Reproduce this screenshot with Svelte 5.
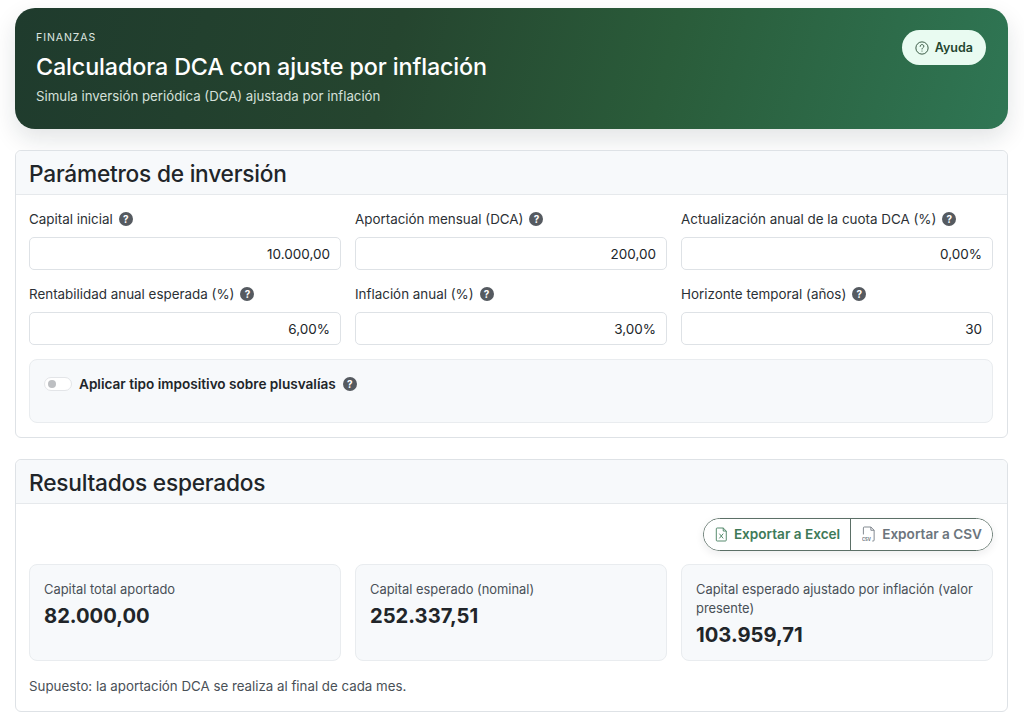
<script lang="ts">
  const fields = [
    { label: 'Capital inicial', value: '10.000,00' },
    { label: 'Aportación mensual (DCA)', value: '200,00' },
    { label: 'Actualización anual de la cuota DCA (%)', value: '0,00%' },
    { label: 'Rentabilidad anual esperada (%)', value: '6,00%' },
    { label: 'Inflación anual (%)', value: '3,00%' },
    { label: 'Horizonte temporal (años)', value: '30' }
  ];

  const results = [
    { label: 'Capital total aportado', value: '82.000,00' },
    { label: 'Capital esperado (nominal)', value: '252.337,51' },
    { label: 'Capital esperado ajustado por inflación (valor presente)', value: '103.959,71' }
  ];
</script>

{#snippet hint()}
  <span class="hint">?</span>
{/snippet}

<div class="page">
  <header class="hero">
    <div>
      <div class="eyebrow">FINANZAS</div>
      <h1>Calculadora DCA con ajuste por inflación</h1>
      <p>Simula inversión periódica (DCA) ajustada por inflación</p>
    </div>
    <button class="help">
      <svg width="14" height="14" viewBox="0 0 16 16" fill="none" stroke="currentColor" stroke-width="1">
        <circle cx="8" cy="8" r="7" />
        <path d="M5.9 6.1c0-1.2.9-2 2.1-2s2.1.8 2.1 1.9c0 1.6-2.1 1.7-2.1 3.2" stroke-linecap="round" />
        <circle cx="8" cy="11.5" r=".6" fill="currentColor" stroke="none" />
      </svg>
      Ayuda
    </button>
  </header>

  <section class="card">
    <h2 class="card-header">Parámetros de inversión</h2>
    <div class="card-body">
      <div class="grid">
        {#each fields as field}
          <div class="field">
            <div class="label">{field.label} {@render hint()}</div>
            <input type="text" value={field.value} />
          </div>
        {/each}
      </div>
      <div class="tax">
        <span class="switch"><span class="knob"></span></span>
        <span class="tax-label">Aplicar tipo impositivo sobre plusvalías</span>
        {@render hint()}
      </div>
    </div>
  </section>

  <section class="card">
    <h2 class="card-header">Resultados esperados</h2>
    <div class="card-body results-body">
      <div class="actions">
        <div class="btn-group">
          <button class="excel">
            <svg width="13" height="15" viewBox="0 0 15 17" fill="none" stroke="currentColor" stroke-width="1">
              <path d="M2.5 1h7l3.5 3.5V15a1 1 0 0 1-1 1h-9.500a1 1 0 0 1-1-1V2a1 1 0 0 1 1-1z" />
              <path d="M9.500 1v3.500H13" />
              <path d="M5 7.500l4.500 5.500M9.500 7.500L5 13" />
            </svg>
            Exportar a Excel
          </button>
          <button class="csv">
            <svg width="14" height="16" viewBox="0 0 15 17" fill="none" stroke="currentColor" stroke-width="0.9">
              <path d="M1.500 9V2a1 1 0 0 1 1-1h7l3.500 3.500V15a1 1 0 0 1-1 1h-1" />
              <path d="M9.500 1v3.500H13" />
              <text x="0" y="15.500" font-size="4.500" font-weight="700" fill="currentColor" stroke="none">CSV</text>
            </svg>
            Exportar a CSV
          </button>
        </div>
      </div>
      <div class="stats">
        {#each results as result}
          <div class="stat">
            <div class="stat-label">{result.label}</div>
            <div class="stat-value">{result.value}</div>
          </div>
        {/each}
      </div>
      <p class="note">Supuesto: la aportación DCA se realiza al final de cada mes.</p>
    </div>
  </section>
</div>

<style>
  :global(body) {
    margin: 0;
    background: #fff;
    font-family: Inter, "Liberation Sans", sans-serif;
    color: #212529;
  }

  .page {
    display: flex;
    flex-direction: column;
    gap: 21px;
    padding: 8px 16px 0 15px;
    height: 718px;
    overflow: hidden;
  }

  .hero {
    display: flex;
    justify-content: space-between;
    align-items: flex-start;
    box-sizing: border-box;
    height: 121px;
    padding: 22px 22px 0 21px;
    border-radius: 20px;
    color: #fff;
    background: linear-gradient(105deg, #1f3b2d 0%, #25452f 38%, #2a5c3a 65%, #2f7654 100%);
    box-shadow: 0 10px 24px rgba(20, 30, 40, 0.12);
  }

  .eyebrow {
    margin-top: 1px;
    font-size: 10.500px;
    line-height: 14px;
    letter-spacing: 0.09em;
    color: #dfe7e2;
  }

  h1 {
    margin: 6px 0 0;
    font-size: 23.300px;
    line-height: 32px;
    font-weight: 500;
    letter-spacing: -0.005em;
  }

  .hero p {
    margin: 4px 0 0;
    font-size: 13.250px;
    line-height: 18px;
    color: #d5e0da;
  }

  .help {
    display: flex;
    align-items: center;
    gap: 6px;
    height: 35px;
    padding: 0 13px;
    border: none;
    border-radius: 18px;
    background: #e9fbf1;
    color: #24452f;
    font: 600 12.500px Inter, sans-serif;
  }

  .card {
    border: 1px solid #dee2e6;
    border-radius: 6px;
    background: #fff;
  }

  .card-header {
    box-sizing: border-box;
    height: 44px;
    margin: 0;
    padding: 1px 13px 0;
    border-bottom: 1px solid #e6e9ec;
    border-radius: 6px 6px 0 0;
    background: #f7f9fb;
    font-size: 22.700px;
    line-height: 43px;
    font-weight: 500;
    letter-spacing: -0.01em;
  }

  .card-body {
    padding: 14px 14px 14px 13px;
  }

  .grid {
    display: grid;
    grid-template-columns: repeat(3, 1fr);
    gap: 14px;
  }

  .field {
    min-width: 0;
  }

  .label {
    display: flex;
    align-items: center;
    gap: 3px;
    height: 20px;
    margin-bottom: 8px;
    font-size: 13.400px;
    color: #2b3035;
  }

  input {
    display: block;
    box-sizing: border-box;
    width: 100%;
    height: 33px;
    padding: 0 10px;
    border: 1px solid #dee2e6;
    border-radius: 5px;
    background: #fff;
    color: #212529;
    font: 400 13.500px Inter, sans-serif;
    text-align: right;
  }

  .hint {
    display: inline-flex;
    align-items: center;
    justify-content: center;
    width: 14px;
    height: 14px;
    margin-left: 3px;
    border-radius: 50%;
    background: #555a60;
    color: #fff;
    font-size: 10px;
    font-weight: 700;
  }

  .tax {
    display: flex;
    align-items: flex-start;
    box-sizing: border-box;
    height: 64px;
    margin-top: 14px;
    padding: 15px 14px;
    border: 1px solid #e9ecef;
    border-radius: 8px;
    background: #f7f9fb;
  }

  .tax .hint {
    margin-top: 2px;
    margin-left: 7px;
  }

  .switch {
    display: flex;
    align-items: center;
    box-sizing: border-box;
    width: 28px;
    height: 14px;
    margin: 2px 7px 0 0;
    padding-left: 3px;
    border: 1px solid #e3e5e8;
    border-radius: 7px;
    background: #fff;
  }

  .knob {
    width: 8px;
    height: 8px;
    border-radius: 50%;
    background: #bdbfc2;
  }

  .tax-label {
    font-size: 13.600px;
    line-height: 18px;
    font-weight: 600;
  }

  .results-body {
    padding-bottom: 0;
  }

  .actions {
    display: flex;
    justify-content: flex-end;
  }

  .btn-group {
    display: flex;
    height: 33px;
    box-sizing: border-box;
    border: 1px solid #5b6f66;
    border-radius: 17px;
    overflow: hidden;
    box-shadow: 0 3px 8px rgba(20, 30, 40, 0.08);
  }

  .btn-group button {
    display: flex;
    align-items: center;
    gap: 6px;
    padding: 0 10px 1px 11px;
    border: none;
    background: #fff;
    font: 600 13.600px Inter, sans-serif;
  }

  .excel {
    color: #3e7a58;
    border-right: 1px solid #5b6f66 !important;
  }

  .csv {
    color: #6c757d;
  }

  .stats {
    display: grid;
    grid-template-columns: repeat(3, 1fr);
    gap: 14px;
    margin-top: 13px;
  }

  .stat {
    box-sizing: border-box;
    height: 97px;
    padding: 15px 14px;
    border: 1px solid #e9ecef;
    border-radius: 8px;
    background: #f7f9fb;
  }

  .stat-label {
    font-size: 12.900px;
    line-height: 19px;
    color: #495057;
  }

  .stat-value {
    margin-top: 4px;
    font-size: 20.200px;
    line-height: 26px;
    font-weight: 700;
  }

  .note {
    margin: 16px 0 0;
    font-size: 13.300px;
    line-height: 18px;
    color: #495057;
    padding-bottom: 16px;
  }
</style>
